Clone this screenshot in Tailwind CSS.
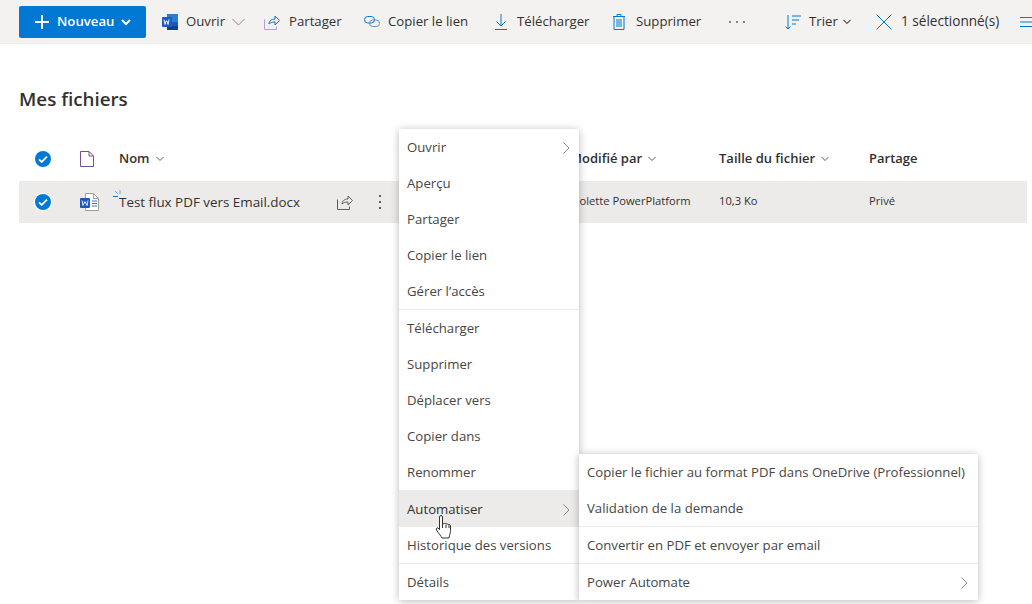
<!DOCTYPE html>
<html lang="fr">
<head>
    <meta charset="UTF-8">
    <title>Mes fichiers</title>
    <script src="https://cdn.jsdelivr.net/npm/@tailwindcss/browser@4"></script>
</head>
<body class="relative h-[604px] w-[1032px] overflow-hidden bg-white font-['Open_Sans',sans-serif] text-[#323130]">
    <!-- command bar -->
    <div class="flex h-[44px] items-center overflow-hidden whitespace-nowrap border-b border-[#edebe9] bg-[#f3f2f1] text-[13.2px] *:shrink-0">
        <button class="ml-[19px] flex h-[32px] w-[127px] items-center rounded-[2px] bg-[#0078d4] pl-[15px] font-semibold text-white">
            <svg class="h-[16px] w-[16px]" viewBox="0 0 16 16" fill="none" stroke="white" stroke-width="2"><path d="M8 1v14M1 8h14"/></svg>
            <span class="ml-[7px]">Nouveau</span>
            <svg class="ml-[7px] h-[10px] w-[10px]" viewBox="0 0 10 10" fill="none" stroke="white" stroke-width="2"><path d="M1 3l4 4 4-4"/></svg>
        </button>
        <svg class="ml-[16px] h-[16px] w-[16px]" viewBox="0 0 16 16"><path d="M5 0h10a1 1 0 0 1 1 1v14a1 1 0 0 1-1 1H5z" fill="#2b7cd3"/><path d="M5 8h11v4H5z" fill="#185abd"/><path d="M5 12h11v3a1 1 0 0 1-1 1H5z" fill="#103f91"/><rect y="3" width="10" height="10" rx="1" fill="#1a5dbe"/><path d="M2 5.500l1 5 1-3.500h1l1 3.500 1-5" fill="none" stroke="white" stroke-width=".9"/></svg>
        <span class="ml-[8px] w-[39px]">Ouvrir</span>
        <svg class="ml-[7px] h-[13px] w-[13px]" viewBox="0 0 13 13" fill="none" stroke="#8a8886"><path d="M.5 4l6 6 6-6"/></svg>
        <svg class="ml-[19px] h-[16px] w-[16px]" viewBox="0 0 16 16" fill="none" stroke="#0078d4"><path d="M5 10c0-3 2.500-5 6-5V2l4.500 4.500L11 11V8c-2.500 0-4.500.500-6 2z"/><path d="M.5 5.500v10h12v-3" stroke="#b4a0d8"/></svg>
        <span class="ml-[9px] w-[51px]">Partager</span>
        <svg class="ml-[24px] h-[11px] w-[16px]" viewBox="0 0 16 11" fill="none" stroke="#0078d4"><rect x=".5" y=".5" width="10" height="6.500" rx="3.250"/><rect x="5.500" y="4" width="10" height="6.500" rx="3.250" stroke="#5b8fd0"/></svg>
        <span class="ml-[8px] w-[81px]">Copier le lien</span>
        <svg class="ml-[26px] h-[16px] w-[12px]" viewBox="0 0 12 16" fill="none" stroke="#0078d4"><path d="M6 0v12M1.500 7.500L6 12l4.500-4.500M0 15.500h12"/></svg>
        <span class="ml-[10px] w-[71px]">Télécharger</span>
        <svg class="ml-[25px] h-[16px] w-[12px]" viewBox="0 0 12 16" fill="none" stroke="#0078d4"><path d="M0 2.500h12M4 2.500V.5h4v2M1 2.500v13h10v-13M4 5v8M6 5v8M8 5v8"/></svg>
        <span class="ml-[11px] w-[64px]">Supprimer</span>
        <div class="ml-[29px] flex w-[16px] justify-between">
            <span class="h-[2px] w-[2px] rounded-full bg-[#605e5c]"></span>
            <span class="h-[2px] w-[2px] rounded-full bg-[#605e5c]"></span>
            <span class="h-[2px] w-[2px] rounded-full bg-[#605e5c]"></span>
        </div>
        <svg class="ml-[40px] h-[16px] w-[16px]" viewBox="0 0 16 16" fill="none" stroke="#0078d4"><path d="M3 1v14M.5 12.500L3 15l2.500-2.500M7 2h9M7 6h7M7 10h4"/></svg>
        <span class="ml-[8px] w-[26px]">Trier</span>
        <svg class="ml-[8px] h-[8px] w-[8px]" viewBox="0 0 8 8" fill="none" stroke="#605e5c" stroke-width="1.200"><path d="M.5 2L4 5.500 7.500 2"/></svg>
        <svg class="ml-[25px] h-[16px] w-[16px]" viewBox="0 0 16 16" fill="none" stroke="#0078d4"><path d="M.5.5l15 15M15.500.5l-15 15"/></svg>
        <span class="ml-[9px] w-[100px] text-[13.6px]">1 sélectionné(s)</span>
        <svg class="ml-[19px] h-[12px] w-[14px]" viewBox="0 0 14 12" fill="none" stroke="#0078d4"><path d="M0 1.500h14M0 6h14M0 10.500h14"/></svg>
    </div>

    <h1 class="ml-[19px] mt-[42px] text-[18.800px] font-semibold leading-[26px]">Mes fichiers</h1>

    <!-- file list -->
    <div class="ml-[19px] mt-[26px] w-[1008px]">
        <div class="flex h-[43px] items-center pb-[1px] text-[13px] font-semibold">
            <div class="flex w-[48px] justify-center">
                <svg class="h-[16px] w-[16px]" viewBox="0 0 16 16"><circle cx="8" cy="8" r="8" fill="#0078d4"/><path d="M4 8.300l2.700 2.700L12 5.700" fill="none" stroke="white" stroke-width="1.800"/></svg>
            </div>
            <div class="ml-[13px] w-[39px]">
                <svg class="h-[16px] w-[14px]" viewBox="0 0 14 16" fill="none" stroke="#7a4f8f"><path d="M.5.5h8.500l4.500 4.500v10.500H.5zM9 .5v4.500h4.500"/></svg>
            </div>
            <div class="flex w-[451px] items-center">Nom
                <svg class="ml-[6px] h-[8px] w-[8px]" viewBox="0 0 8 8" fill="none" stroke="#605e5c"><path d="M.5 2L4 5.500 7.500 2"/></svg>
            </div>
            <div class="flex w-[149px] items-center">Modifié par
                <svg class="ml-[6px] h-[8px] w-[8px]" viewBox="0 0 8 8" fill="none" stroke="#605e5c"><path d="M.5 2L4 5.500 7.500 2"/></svg>
            </div>
            <div class="flex w-[150px] items-center">Taille du fichier
                <svg class="ml-[6px] h-[8px] w-[8px]" viewBox="0 0 8 8" fill="none" stroke="#605e5c"><path d="M.5 2L4 5.500 7.500 2"/></svg>
            </div>
            <div>Partage</div>
        </div>
        <div class="relative flex h-[42px] items-center bg-[#edebe9] text-[11.200px]">
            <div class="flex w-[48px] justify-center">
                <svg class="h-[18px] w-[18px]" viewBox="0 0 18 18"><circle cx="9" cy="9" r="9" fill="white"/><circle cx="9" cy="9" r="8" fill="#0078d4"/><path d="M5 9.300l2.700 2.700L13 6.700" fill="none" stroke="white" stroke-width="1.800"/></svg>
            </div>
            <div class="ml-[13px] w-[39px]">
                <svg class="h-[18px] w-[19px]" viewBox="0 0 19 18"><path d="M5.500.5h8l5 5v12h-13z" fill="white" stroke="#a19f9d"/><path d="M13.500.5v5h5" fill="none" stroke="#a19f9d"/><path d="M12 8h5M12 10.500h5M12 13h5" stroke="#2b7cd3"/><rect y="5" width="10" height="10" rx="1" fill="#185abd"/><path d="M2 7.500l1 5 2-4 2 4 1-5" fill="none" stroke="white" stroke-width=".9"/></svg>
            </div>
            <div class="flex w-[451px] items-center pt-[1px] text-[13.400px] font-medium">Test flux PDF vers Email.docx</div>
            <div class="w-[149px] pb-[1px]">Violette PowerPlatform</div>
            <div class="w-[150px] pb-[1px]">10,3 Ko</div>
            <div class="pb-[1px]">Privé</div>
            <svg class="absolute left-[94px] top-[9px] h-[7px] w-[8px]" viewBox="0 0 8 7" fill="none" stroke="#0078d4"><path d="M0 6.500h5"/><path d="M2 1l3 3M7 0v4" stroke="#6aa9e0"/></svg>
            <svg class="absolute left-[318px] top-[13px] h-[16px] w-[16px]" viewBox="0 0 16 16" fill="none" stroke="#605e5c"><path d="M5 10c0-3 2.500-5 6-5V2l4.500 4.500L11 11V8c-2.500 0-4.500.500-6 2z"/><path d="M.5 5.500v10h12v-3"/></svg>
            <div class="absolute left-[360px] top-[14px] flex h-[14px] flex-col justify-between">
                <span class="h-[2px] w-[2px] bg-[#605e5c]"></span>
                <span class="h-[2px] w-[2px] bg-[#605e5c]"></span>
                <span class="h-[2px] w-[2px] bg-[#605e5c]"></span>
            </div>
        </div>
    </div>

    <!-- context menu -->
    <div class="absolute left-[399px] top-[129px] w-[180px] bg-white text-[13.200px] text-[#484644] shadow-[0_1px_8px_rgba(0,0,0,0.28)]">
        <div class="flex h-[36px] items-center justify-between pl-[8px] pr-[9px] pt-[2px]">Ouvrir
            <svg class="h-[12px] w-[7px]" viewBox="0 0 7 12" fill="none" stroke="#8a8886"><path d="M.5.5L6 6 .5 11.500"/></svg>
        </div>
        <div class="flex h-[36px] items-center pl-[8px] pt-[2px]">Aperçu</div>
        <div class="flex h-[36px] items-center pl-[8px] pt-[2px]">Partager</div>
        <div class="flex h-[36px] items-center pl-[8px] pt-[2px]">Copier le lien</div>
        <div class="flex h-[36px] items-center pl-[8px] pt-[2px]">Gérer l’accès</div>
        <div class="h-[1px] bg-[#edebe9]"></div>
        <div class="flex h-[36px] items-center pl-[8px] pt-[2px]">Télécharger</div>
        <div class="flex h-[36px] items-center pl-[8px] pt-[2px]">Supprimer</div>
        <div class="flex h-[36px] items-center pl-[8px] pt-[2px]">Déplacer vers</div>
        <div class="flex h-[36px] items-center pl-[8px] pt-[2px]">Copier dans</div>
        <div class="flex h-[36px] items-center pl-[8px] pt-[2px]">Renommer</div>
        <div class="flex h-[37px] items-center justify-between bg-[#edebe9] pl-[8px] pr-[9px] pt-[2px] text-[#323130]">Automatiser
            <svg class="h-[12px] w-[7px]" viewBox="0 0 7 12" fill="none" stroke="#8a8886"><path d="M.5.5L6 6 .5 11.500"/></svg>
        </div>
        <div class="flex h-[36px] items-center pl-[8px] pt-[2px]">Historique des versions</div>
        <div class="h-[1px] bg-[#edebe9]"></div>
        <div class="flex h-[36px] items-center pl-[8px] pt-[2px]">Détails</div>
    </div>

    <!-- automate submenu -->
    <div class="absolute left-[579px] top-[454px] w-[399px] bg-white text-[13.200px] text-[#484644] shadow-[0_1px_8px_rgba(0,0,0,0.28)]">
        <div class="flex h-[36px] items-center pl-[8px] pt-[2px]">Copier le fichier au format PDF dans OneDrive (Professionnel)</div>
        <div class="flex h-[36px] items-center pl-[8px] pt-[2px]">Validation de la demande</div>
        <div class="h-[1px] bg-[#edebe9]"></div>
        <div class="flex h-[36px] items-center pl-[8px] pt-[2px]">Convertir en PDF et envoyer par email</div>
        <div class="h-[1px] bg-[#edebe9]"></div>
        <div class="flex h-[36px] items-center justify-between pl-[8px] pr-[10px] pt-[2px]">Power Automate
            <svg class="h-[12px] w-[7px]" viewBox="0 0 7 12" fill="none" stroke="#8a8886"><path d="M.5.5L6 6 .5 11.500"/></svg>
        </div>
    </div>

    <!-- mouse pointer -->
    <svg class="absolute left-[435px] top-[515px] h-[24px] w-[18px]" viewBox="0 0 18 24" fill="white" stroke="#323130" stroke-linejoin="round"><path d="M4.500 2a1.500 1.500 0 0 1 3 0v7l2 -.5c.5-.2 1.500 0 1.500.5 .5-.3 2-.3 2 .5 .5-.3 2-.2 2.500 1v5c0 3-1 4-1.500 7.500H7c-1-2-3-4-5.500-8-.8-1.500.5-2.500 1.500-2l1.500 1.500z"/><path d="M7.500 9v4M11 9.500V13M14 10v3"/></svg>
</body>
</html>
